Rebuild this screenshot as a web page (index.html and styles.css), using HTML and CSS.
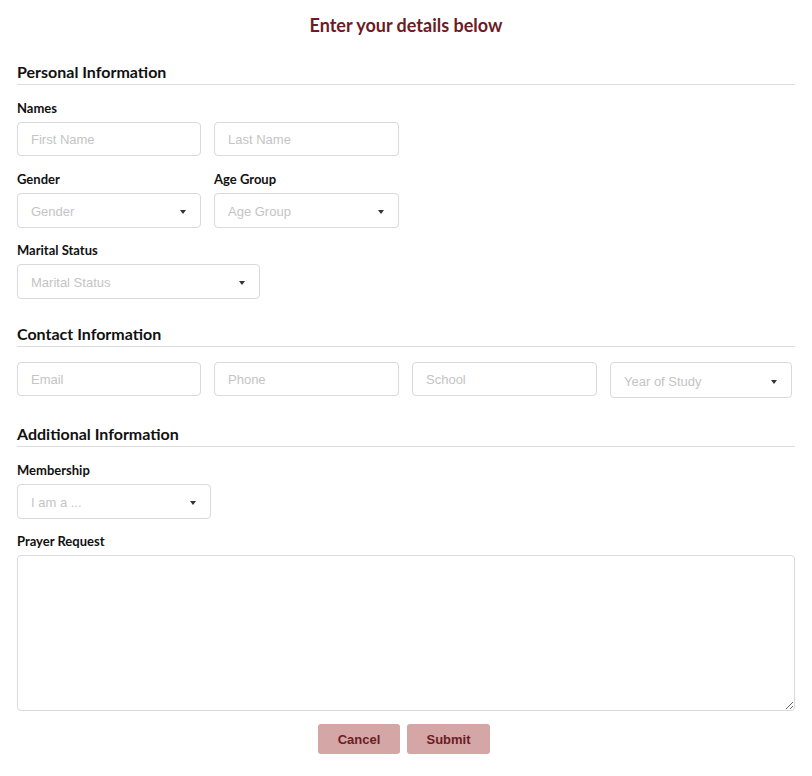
FILE: index.html
```html
<!DOCTYPE html>
<html>
<head>
<meta charset="utf-8">
<link rel="stylesheet" href="styles.css">
</head>
<body>
<form class="form">
  <h1 class="title">Enter your details below</h1>

  <section class="section">
    <h2 class="section-title">Personal Information</h2>
    <div class="field">
      <label class="label">Names</label>
      <div class="row">
        <input class="input w184" placeholder="First Name">
        <input class="input w185" placeholder="Last Name">
      </div>
    </div>
    <div class="row">
      <div class="field tight">
        <label class="label">Gender</label>
        <div class="select w184"><span>Gender</span><i class="caret"></i></div>
      </div>
      <div class="field tight">
        <label class="label">Age Group</label>
        <div class="select w185"><span>Age Group</span><i class="caret"></i></div>
      </div>
    </div>
    <div class="field">
      <label class="label">Marital Status</label>
      <div class="select w243"><span>Marital Status</span><i class="caret"></i></div>
    </div>
  </section>

  <section class="section">
    <h2 class="section-title">Contact Information</h2>
    <div class="row contact">
      <input class="input w184" placeholder="Email">
      <input class="input w185" placeholder="Phone">
      <input class="input w185" placeholder="School">
      <div class="select w182 tall"><span>Year of Study</span><i class="caret"></i></div>
    </div>
  </section>

  <section class="section">
    <h2 class="section-title">Additional Information</h2>
    <div class="field tight">
      <label class="label">Membership</label>
      <div class="select w194"><span>I am a ...</span><i class="caret"></i></div>
    </div>
    <div class="field last">
      <label class="label">Prayer Request</label>
      <textarea class="textarea"></textarea>
    </div>
  </section>

  <div class="actions">
    <button type="button" class="btn">Cancel</button>
    <button type="button" class="btn">Submit</button>
  </div>
</form>
</body>
</html>
```

FILE: styles.css
```css
* { box-sizing: border-box; }
html, body { margin: 0; padding: 0; background: #fff; }
body { font-family: Lato, "Open Sans", sans-serif; color: #111; }

.form { padding: 0 17px; }

.title {
  margin: 0;
  padding-top: 14px;
  height: 62px;
  text-align: center;
  font-size: 18px;
  line-height: 22px;
  font-weight: 700;
  color: #6b1c24;
}

.section-title {
  margin: 0 0 15px;
  font-size: 16px;
  line-height: 20px;
  font-weight: 700;
  color: #111;
  padding-bottom: 2px;
  border-bottom: 1px solid #dcdcdc;
}

.section + .section .section-title { margin-top: 25px; }

.field { margin-bottom: 15px; }
.field.tight { margin-bottom: 14px; }
.field.last { margin-bottom: 13px; }

.label {
  display: block;
  font-size: 13px;
  line-height: 17px;
  font-weight: 700;
  color: #111;
  margin-bottom: 5px;
}

.row { display: flex; gap: 13px; }
.row.contact { margin-bottom: 26px; }

.input, .select, .textarea {
  border: 1px solid #d9d9d9;
  border-radius: 4px;
  background: #fff;
  font-family: "Liberation Sans", Arial, sans-serif;
  font-size: 13px;
  color: #c4c4c4;
}

.input {
  height: 34px;
  padding: 0 13px;
  outline: none;
}
.input::placeholder { color: #c4c4c4; }

.select {
  height: 35px;
  display: flex;
  align-items: center;
  justify-content: space-between;
  padding: 2px 14px 0 13px;
}
.select.tall { height: 36px; padding-top: 3px; }

.caret {
  width: 0; height: 0;
  border-left: 3.5px solid transparent;
  border-right: 3.5px solid transparent;
  border-top: 4px solid #333;
}

.w182 { width: 182px; }
.w184 { width: 184px; }
.w185 { width: 185px; }
.w194 { width: 194px; }
.w243 { width: 243px; }

.textarea {
  display: block;
  width: 778px;
  height: 156px;
  resize: vertical;
  margin: 0;
}

.actions {
  display: flex;
  justify-content: center;
  gap: 7px;
  padding-right: 4px;
}

.btn {
  width: 82px;
  height: 30px;
  border: none;
  border-radius: 3px;
  background: #d4a6a6;
  color: #6b1c24;
  font-family: "Liberation Sans", Arial, sans-serif;
  font-size: 13px;
  font-weight: 700;
  padding: 0;
}
.btn + .btn { width: 83px; }
```
